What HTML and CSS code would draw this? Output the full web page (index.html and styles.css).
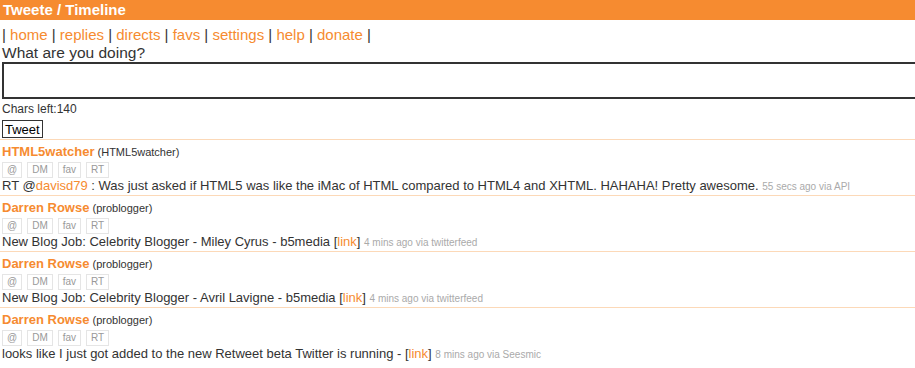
FILE: index.html
```html
<!DOCTYPE html>
<html lang="en">
<head>
    <meta charset="UTF-8">
    <meta name="viewport" content="width=device-width, initial-scale=1.0">
    <title>Tweete / Timeline</title>
    <link rel="stylesheet" href="styles.css">
</head>
<body>
    <div class="header">Tweete / Timeline</div>
    <div class="nav">
        | <a href="#">home</a> | <a href="#">replies</a> | <a href="#">directs</a> | <a href="#">favs</a> | <a href="#">settings</a> | <a href="#">help</a> | <a href="#">donate</a> |
    </div>
    <form class="compose">
        <label class="prompt">What are you doing?</label>
        <textarea class="status"></textarea>
        <div class="chars">Chars left:140</div>
        <button type="button" class="tweet-btn">Tweet</button>
    </form>
    <ul class="timeline">
        <li class="tweet">
            <div class="who"><a class="name" href="#">HTML5watcher</a> <span class="screen">(HTML5watcher)</span></div>
            <div class="actions"><span>@</span><span>DM</span><span>fav</span><span>RT</span></div>
            <div class="text">RT @<a href="#">davisd79</a> : Was just asked if HTML5 was like the iMac of HTML compared to HTML4 and XHTML. HAHAHA! Pretty awesome. <span class="meta">55 secs ago via API</span></div>
        </li>
        <li class="tweet">
            <div class="who"><a class="name" href="#">Darren Rowse</a> <span class="screen">(problogger)</span></div>
            <div class="actions"><span>@</span><span>DM</span><span>fav</span><span>RT</span></div>
            <div class="text">New Blog Job: Celebrity Blogger - Miley Cyrus - b5media [<a href="#">link</a>] <span class="meta">4 mins ago via twitterfeed</span></div>
        </li>
        <li class="tweet">
            <div class="who"><a class="name" href="#">Darren Rowse</a> <span class="screen">(problogger)</span></div>
            <div class="actions"><span>@</span><span>DM</span><span>fav</span><span>RT</span></div>
            <div class="text">New Blog Job: Celebrity Blogger - Avril Lavigne - b5media [<a href="#">link</a>] <span class="meta">4 mins ago via twitterfeed</span></div>
        </li>
        <li class="tweet">
            <div class="who"><a class="name" href="#">Darren Rowse</a> <span class="screen">(problogger)</span></div>
            <div class="actions"><span>@</span><span>DM</span><span>fav</span><span>RT</span></div>
            <div class="text">looks like I just got added to the new Retweet beta Twitter is running - [<a href="#">link</a>] <span class="meta">8 mins ago via Seesmic</span></div>
        </li>
    </ul>
</body>
</html>
```

FILE: styles.css
```css
* {
    margin: 0;
    padding: 0;
    box-sizing: border-box;
}
body {
    font-family: "Liberation Sans", Arial, sans-serif;
    color: #333;
    background: #fff;
    width: 930px;
    overflow: hidden;
}
a {
    color: #f68b30;
    text-decoration: none;
}
.header {
    height: 20px;
    line-height: 20px;
    padding-left: 3px;
    background: #f68b30;
    color: #fff;
    font-weight: bold;
    font-size: 15px;
}
.nav {
    font-size: 15px;
    line-height: 19px;
    padding: 5px 0 0 2px;
}
.compose {
    padding-left: 2px;
}
.prompt {
    display: block;
    font-size: 15.5px;
    line-height: 18px;
}
.status {
    display: block;
    width: 930px;
    height: 37px;
    border: 2px solid #333;
    resize: none;
}
.chars {
    font-size: 12px;
    line-height: 14px;
    margin-top: 3px;
}
.tweet-btn {
    margin-top: 4px;
    font-family: inherit;
    font-size: 13px;
    height: 18px;
    padding: 0 2px;
    border: 1px solid #333;
    background: #fff;
    color: #000;
}
.timeline {
    list-style: none;
}
.tweet {
    height: 56px;
    border-top: 1px solid #fcd9b8;
    padding: 4px 0 0 2px;
}
.timeline .tweet:first-child {
    margin-top: 1px;
}
.who {
    font-size: 11px;
    line-height: 15px;
}
.name {
    font-size: 13px;
    font-weight: bold;
}
.actions {
    display: flex;
    gap: 5px;
    margin-top: 2px;
}
.actions span {
    min-width: 20px;
    text-align: center;
    border: 1px solid #e5e5e5;
    color: #999;
    font-size: 10px;
    height: 16px;
    line-height: 14px;
    padding: 0 4px;
}
.text {
    font-size: 13px;
    line-height: 16px;
}
.meta {
    color: #aaa;
    font-size: 10px;
}
```
